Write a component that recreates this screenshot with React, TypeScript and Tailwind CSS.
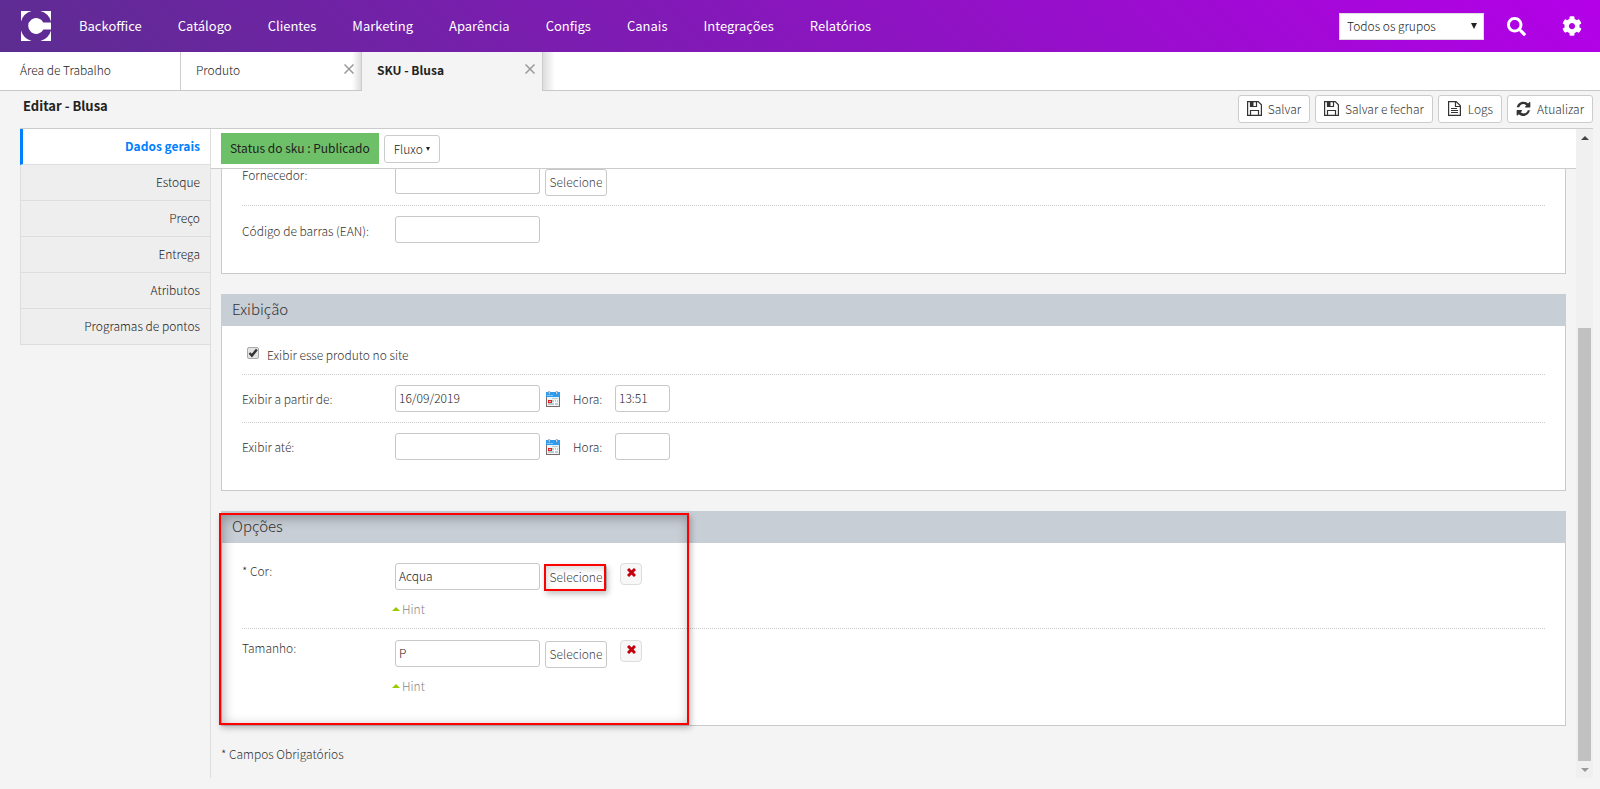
import * as React from "react"
import { useState } from "react"
import { FaSearch, FaCog } from "react-icons/fa"

const menu = ["Backoffice", "Catálogo", "Clientes", "Marketing", "Aparência", "Configs", "Canais", "Integrações", "Relatórios"]

const sections = ["Dados gerais", "Estoque", "Preço", "Entrega", "Atributos", "Programas de pontos"]

const Logo = () => (
  <svg viewBox="0 0 30 30" className="size-[30px]" aria-hidden="true">
    <path fill="#fff" d="M0 0h10.5A15.3 15.3 0 0 0 0 10.5zM30 0v10.5A15.3 15.3 0 0 0 19.5 0zM0 30V19.5A15.3 15.3 0 0 0 10.5 30zM30 30H19.5A15.3 15.3 0 0 0 30 19.5z" />
    <path fill="#fff" d="M30 11.5v7h-7.6a8 8 0 1 1 0-7z" />
  </svg>
)

const SaveIcon = () => (
  <svg viewBox="0 0 15 15" className="size-[15px]" fill="none" stroke="#333" aria-hidden="true">
    <path strokeWidth="1.2" d="M.6.6h10.6l3.2 3.2v10.6H.6zM3.5 14V9.5h8V14M3.5 1v4.5h6V1" />
    <path fill="#333" stroke="none" d="M3.5 1h3v4.5h-3z" />
  </svg>
)

const LogIcon = () => (
  <svg viewBox="0 0 15 15" className="size-[15px]" fill="none" stroke="#333" aria-hidden="true">
    <path strokeWidth="1.2" d="M1.6.6h7.6l4.2 4.2v9.6H1.6zM8.5 1v4.5H13" />
    <path d="M4 7.5h6M4 9.5h7M4 11.5h7" />
  </svg>
)

const RefreshIcon = () => (
  <svg viewBox="0 0 512 512" className="size-[15px]" fill="#333" aria-hidden="true">
    <path d="M481 308c0 1 0 2-.3 3C448 444 343 512 252 512c-58 0-114-23-156-63l-43 43c-3 3-8 5-13 5-10 0-18-8-18-18V329c0-10 8-18 18-18h150c10 0 18 8 18 18 0 5-2 10-5 13l-46 46c28 26 65 40 103 40 51 0 98-26 125-70 7-11 10-22 15-34 2-4 4-7 9-7h64c5 0 9 5 9 9zM490 55v150c0 10-8 18-18 18H322c-10 0-18-8-18-18 0-5 2-10 5-13l46-46C327 120 290 106 252 106c-51 0-98 26-125 70-7 11-10 22-15 34-2 4-4 7-9 7H37c-5 0-9-5-9-9v-4C61 71 161 22 252 22c58 0 114 23 157 63l44-43c3-3 8-5 13-5 10 0 24 8 24 18z" />
  </svg>
)

const CalendarIcon = () => (
  <svg viewBox="0 0 14 16" className="h-4 w-3.5" aria-hidden="true">
    <path fill="#7d6a6a" d="M0 5h14v11H0z" />
    <path fill="#eef3f3" d="M1 6h12v9H1z" />
    <path fill="#2a9df0" d="M0 1h14v5H0z" />
    <path fill="#7cc6fa" d="M1 4h6v1H1z" />
    <path fill="#b9cfcf" d="M6 7h6v1H6zM2 12h10v2H2zM6 9h6v2H6z" />
    <path fill="#fff" d="M8 9h1v5H8zM10 9h1v3h-1z" />
    <path fill="#e02020" d="M2 9h4v3H2z" />
    <path fill="#fbb" d="M3 10h2v1H3z" />
    <path fill="#fff" stroke="#579" strokeWidth=".5" d="M2.5.3h1.4v3H2.5zM10 .3h1.4v3H10z" />
  </svg>
)

const RemoveIcon = () => (
  <svg viewBox="0 0 9 9" className="size-[9px]" aria-hidden="true">
    <path stroke="#c4000f" strokeWidth="3" d="M1 1l7 7M8 1L1 8" />
  </svg>
)

const CloseIcon = () => (
  <svg viewBox="0 0 10 10" className="size-2.5" aria-hidden="true">
    <path stroke="#999" strokeWidth="1.5" d="M.5.5l9 9M9.5.5l-9 9" />
  </svg>
)

const ToolButton = ({ icon, children }: { icon: React.ReactNode; children: React.ReactNode }) => (
  <button className="flex h-7 items-center gap-1.5 rounded-[3px] border border-[#ccc] bg-white px-2 text-[#333]">
    {icon}
    {children}
  </button>
)

const TextField = ({ id, value = "", className = "h-[27px] w-[145px] rounded-[3px] border" }: { id: string; value?: string; className?: string }) => (
  <input id={id} type="text" defaultValue={value} className={`shrink-0 border-[#c8c8c8] bg-white px-[3px] pb-0.5 text-[#222] ${className}`} />
)

const SelectButton = () => (
  <button className="block h-[27px] w-[62px] rounded-[3px] border border-[#c8c8c8] bg-white pb-0.5 text-[#444]">Selecione</button>
)

const Panel = ({ title, children }: { title: string; children: React.ReactNode }) => (
  <section className="relative mt-5 border border-t-0 border-[#c8cacb] bg-white">
    <h2 className="-mx-px h-8 bg-[#c8ced5] px-[11px] text-[15px] leading-[30px]">{title}</h2>
    {children}
  </section>
)

const DateRow = ({ id, label, date, hour }: { id: string; label: string; date?: string; hour?: string }) => (
  <div className="flex h-12 items-center border-t border-dotted border-[#ccc]">
    <label htmlFor={id} className="w-[153px]">{label}</label>
    <TextField id={id} value={date} />
    <button aria-label="Abrir calendário" className="ml-1.5"><CalendarIcon /></button>
    <label htmlFor={`${id}-hora`} className="ml-[13px] w-[42px]">Hora:</label>
    <TextField id={`${id}-hora`} value={hour} className="h-[27px] w-[55px] rounded-[3px] border" />
  </div>
)

const OptionRow = ({ id, label, value, highlight }: { id: string; label: string; value: string; highlight?: boolean }) => (
  <div className="pb-2.5">
    <div className="flex items-start">
      <label htmlFor={id} className="w-[153px] leading-4">{label}</label>
      <TextField id={id} value={value} />
      <div className="relative ml-[5px] pt-px">
        <SelectButton />
        {highlight && <div className="pointer-events-none absolute -left-px bottom-0 right-px top-px border-2 border-[#f00] shadow-[2px_3px_6px_rgba(0,0,0,0.25),inset_2px_3px_6px_rgba(0,0,0,0.15)]" />}
      </div>
      <button aria-label="Remover" className="ml-[13px] flex size-[22px] items-center justify-center rounded-[4px] border border-[#ddd] bg-[#f7f7f7] pb-1">
        <RemoveIcon />
      </button>
    </div>
    <p className="ml-[150px] mt-[9px] flex h-[18px] items-center gap-0.5 text-[#888]">
      <span className="border-x-4 border-b-4 border-x-transparent border-b-[#9c0]" />
      Hint
    </p>
  </div>
)

const App = () => {

  const [shown, setShown] = useState(true)

  return (
    <div className="min-h-screen bg-[#f4f4f4] pb-[11px] font-['Noto_Sans_CJK_SC','Noto_Sans',sans-serif] text-[12px] font-light leading-5 text-[#222]">

      <header className="flex h-[52px] items-center bg-[linear-gradient(45deg,#5c2d91,#b400e8)] pl-[21px] pr-[18px]">
        <a href="#" aria-label="Início"><Logo /></a>
        <nav className="ml-2.5 flex flex-1 text-[13px] font-normal text-white">
          {menu.map((item) => (
            <a key={item} href="#" className="px-[18px]">{item}</a>
          ))}
        </nav>
        <div className="relative">
          <select aria-label="Grupo" className="block h-[27px] w-[145px] appearance-none border border-[#ddd] bg-white pl-[7px]">
            <option>Todos os grupos</option>
          </select>
          <span className="pointer-events-none absolute right-[7px] top-2.5 border-x-3 border-t-6 border-x-transparent border-t-[#222]" />
        </div>
        <button aria-label="Buscar" className="ml-[23px] text-white"><FaSearch size={19} /></button>
        <button aria-label="Configurações" className="ml-9 text-white"><FaCog size={20} /></button>
      </header>

      <nav className="flex h-[39px] border-b border-[#c8c8c8] bg-white">
        <a href="#" className="w-[181px] border-r border-[#ccc] pl-5 leading-9">Área de Trabalho</a>
        <div className="flex w-[181px] justify-between border-r border-[#ccc] bg-linear-to-l from-[#ddd] to-transparent to-5% pl-[15px] pr-[7px] leading-9">
          <a href="#">Produto</a>
          <button aria-label="Fechar Produto" className="h-[34px]"><CloseIcon /></button>
        </div>
        <div className="-mb-px flex w-[181px] justify-between border-r border-[#ccc] bg-[#f4f4f4] pl-[15px] pr-[7px] font-bold leading-9">
          <a href="#">SKU - Blusa</a>
          <button aria-label="Fechar SKU - Blusa" className="h-[34px]"><CloseIcon /></button>
        </div>
        <div className="w-3 bg-linear-to-r from-[#ddd] to-transparent" />
      </nav>

      <main className="pl-5 pr-[7px]">
        <div className="flex h-[38px] items-center justify-between border-b border-[#ccc]">
          <h1 className="pb-2 pl-[3px] text-[13px] font-bold">Editar - Blusa</h1>
          <div className="flex gap-[5px] pb-0.5">
            <ToolButton icon={<SaveIcon />}>Salvar</ToolButton>
            <ToolButton icon={<SaveIcon />}>Salvar e fechar</ToolButton>
            <ToolButton icon={<LogIcon />}>Logs</ToolButton>
            <ToolButton icon={<RefreshIcon />}>Atualizar</ToolButton>
          </div>
        </div>

        <div className="flex">
          <aside className="w-[190px] shrink-0">
            {sections.map((section, index) => (
              <a
                key={section}
                href="#"
                className={index === 0
                  ? "block h-9 border-b border-l-3 border-b-[#ddd] border-l-[#0080ff] bg-white pr-2.5 text-right font-bold leading-[34px] text-[#0080ff]"
                  : "block h-9 border-b border-l border-[#ddd] bg-[#eee] pr-2.5 text-right leading-[34px]"}
              >
                {section}
              </a>
            ))}
          </aside>

          <div className="min-w-0 flex-1 border-l border-[#ddd]">
            <div className="flex h-10 items-center gap-[5px] border-b border-[#ccc] bg-white px-2.5">
              <span className="h-[31px] bg-[#6dc067] px-[9px] font-normal leading-[30px]">Status do sku : Publicado</span>
              <button className="flex h-7 items-center gap-[3px] rounded-[3px] border border-[#ccc] bg-white px-[9px]">
                Fluxo
                <span className="border-x-2 border-t-4 border-x-transparent border-t-[#222]" />
              </button>
            </div>

            <form className="px-2.5 pb-3.5 text-[#333]">
              <section className="border border-t-0 border-[#c8cacb] bg-white px-5 pb-[30px]">
                <div className="flex h-[37px] items-start border-b border-dotted border-[#ccc]">
                  <label htmlFor="fornecedor" className="w-[153px] leading-3">Fornecedor:</label>
                  <TextField id="fornecedor" className="h-[25px] w-[145px] rounded-b-[3px] border-x border-b" />
                  <div className="ml-[5px]"><SelectButton /></div>
                </div>
                <div className="mt-2.5 flex items-center">
                  <label htmlFor="ean" className="w-[153px] pt-0.5">Código de barras (EAN):</label>
                  <TextField id="ean" />
                </div>
              </section>

              <Panel title="Exibição">
                <div className="px-5 pb-5">
                  <label className="flex h-12 items-center gap-2 pl-[5px] pt-2.5">
                    <span className="relative mb-1 size-3">
                      <input
                        type="checkbox"
                        checked={shown}
                        onChange={(e) => setShown(e.target.checked)}
                        className="block size-3 appearance-none rounded-[2px] border border-[#aaa] bg-[#e4e4e4]"
                      />
                      {shown && (
                        <svg viewBox="0 0 12 12" className="pointer-events-none absolute inset-0" fill="none" aria-hidden="true">
                          <path stroke="#333" strokeWidth="2.4" d="M2.5 6l2.4 2.6L9.8 2.6" />
                        </svg>
                      )}
                    </span>
                    Exibir esse produto no site
                  </label>
                  <DateRow id="inicio" label="Exibir a partir de:" date="16/09/2019" hour="13:51" />
                  <DateRow id="fim" label="Exibir até:" />
                </div>
              </Panel>

              <Panel title="Opções">
                <div className="px-5 pb-5 pt-5">
                  <OptionRow id="cor" label="* Cor:" value="Acqua" highlight />
                  <div className="border-t border-dotted border-[#ccc] pt-[11px]">
                    <OptionRow id="tamanho" label="Tamanho:" value="P" />
                  </div>
                </div>
                <div className="pointer-events-none absolute -left-[3px] bottom-0 top-0.5 w-[470px] border-2 border-[#f00] shadow-[2px_3px_6px_rgba(0,0,0,0.25),inset_2px_3px_12px_rgba(0,0,0,0.3)]" />
              </Panel>

              <p className="mt-[18px]">* Campos Obrigatórios</p>
            </form>
          </div>

          <div className="flex w-[17px] shrink-0 flex-col items-center bg-[#f0f0f0]" aria-hidden="true">
            <div className="flex h-[17px] items-center"><span className="border-x-4 border-b-4 border-x-transparent border-b-[#444]" /></div>
            <div className="grow-182" />
            <div className="w-[13px] grow-433 bg-[#c1c1c1]" />
            <div className="flex h-[17px] items-center"><span className="border-x-4 border-t-4 border-x-transparent border-t-[#999]" /></div>
          </div>
        </div>
      </main>
    </div>
  )
}

export default App
